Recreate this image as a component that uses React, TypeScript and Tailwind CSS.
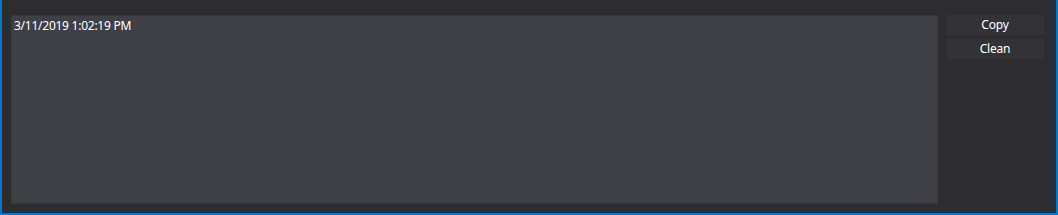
export default function App() {
  return (
    <div className="w-[1058px] h-[215px] bg-[#2d2d30] border-l-2 border-r-2 border-b-2 border-[#007acc] flex gap-[8px] pl-[9px] pr-[12px] pt-[15px] pb-[9px] font-['Noto_Sans',sans-serif] text-[12px] text-white">
      <div className="flex-1 bg-[#3f4046] border border-[#37383c] px-[2px] py-[1px] leading-[18px] tracking-[-0.25px]">
        3/11/2019 1:02:19 PM
      </div>
      <div className="w-[98px] flex flex-col gap-[4px]">
        <button className="h-[20px] bg-[#333337] text-white text-[12px] leading-[18px] tracking-[-0.2px]">Copy</button>
        <button className="h-[20px] bg-[#333337] text-white text-[12px] leading-[18px] tracking-[-0.2px]">Clean</button>
      </div>
    </div>
  );
}
